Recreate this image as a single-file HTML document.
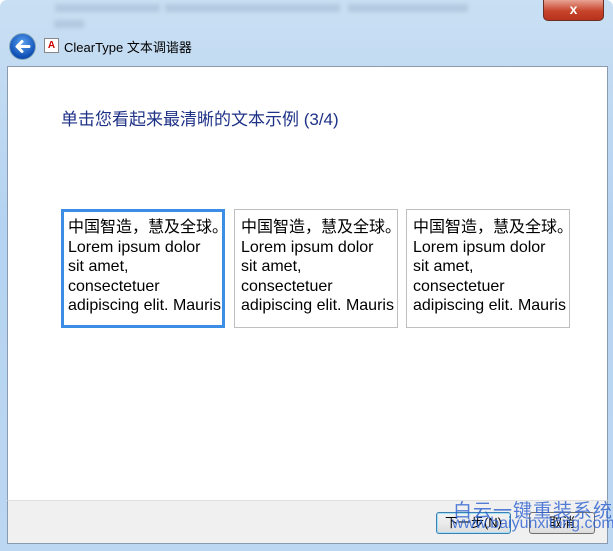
<!DOCTYPE html>
<html><head><meta charset="utf-8"><style>
body{margin:0;width:613px;height:551px;overflow:hidden;font-family:"Liberation Sans","Noto Sans CJK SC",sans-serif;}
.win{position:absolute;left:0;top:0;width:613px;height:551px;background:linear-gradient(180deg,#c9dff3 0%,#b5d3f1 40%,#bcd7f2 100%);border-radius:7px 7px 0 0;}
.blur{position:absolute;top:4px;height:8px;background:#a9c0d8;filter:blur(2px);opacity:.7}
.close{position:absolute;left:543px;top:0;width:59px;height:20px;background:linear-gradient(#e8a394,#c7442b 55%,#b8321c);border:1px solid #6b2e24;border-top:none;border-radius:0 0 5px 5px;color:#fff;font-weight:bold;font-size:14px;text-align:center;line-height:19px}
.back{position:absolute;left:9px;top:33px;width:25px;height:25px;border-radius:50%;background:radial-gradient(circle at 50% 35%,#5aa0f0,#0f4fb5 70%,#0a3a8a);border:1px solid #8ab;}
.title{position:absolute;left:64px;top:37px;font-size:13px;color:#000}
.ico{position:absolute;left:44px;top:38px;width:13px;height:13px;border:1px solid #888;background:#fff;font-size:10px;line-height:13px;text-align:center;color:#c00;font-weight:bold}
.content{position:absolute;left:7px;top:66px;width:599px;height:434px;background:#fff;border:1px solid #8a9bb0;border-bottom:none}
.foot{position:absolute;left:7px;top:500px;width:599px;height:42px;background:#f0f0f0;border:1px solid #8a9bb0;border-top:1px solid #dfdfdf}
h1{position:absolute;left:61px;top:105px;margin:0;font-size:17px;font-weight:normal;color:#1e3287}
.box{position:absolute;top:209px;width:150px;height:103px;padding:8px 6px 6px;border:1px solid #bfbfbf;font-size:16px;line-height:19.5px;color:#000;white-space:nowrap;overflow:hidden}
.box.sel{border:3px solid #3b8de6;padding:6px 4px 4px;width:150px;height:103px}
.btn{position:absolute;top:512px;height:20px;border:1px solid #707070;border-radius:3px;background:linear-gradient(#f2f2f2,#ebebeb 50%,#dcdcdc);font-size:13px;line-height:20px;text-align:center}
.wm{position:absolute;color:#2a5fd0;opacity:.8}
</style></head><body>
<div class="win">
<div class="blur" style="left:55px;width:105px"></div><div class="blur" style="left:165px;width:175px"></div><div class="blur" style="left:348px;width:120px"></div><div class="blur" style="left:54px;top:20px;width:30px"></div>
<div class="close">x</div>
<div class="back"><svg width="25" height="25" viewBox="0 0 25 25"><path d="M19 12.5H8M12 7.5l-5 5 5 5" stroke="#fff" stroke-width="3" fill="none" stroke-linecap="round" stroke-linejoin="round"/></svg></div>
<div class="ico">A</div>
<div class="title">ClearType 文本调谐器</div>
<div class="content"></div>
<div class="foot"></div>
<h1>单击您看起来最清晰的文本示例 (3/4)</h1>
<div class="box sel" style="left:61px">中国智造，慧及全球。<br>Lorem ipsum dolor<br>sit amet,<br>consectetuer<br>adipiscing elit. Mauris</div>
<div class="box" style="left:234px">中国智造，慧及全球。<br>Lorem ipsum dolor<br>sit amet,<br>consectetuer<br>adipiscing elit. Mauris</div>
<div class="box" style="left:406px">中国智造，慧及全球。<br>Lorem ipsum dolor<br>sit amet,<br>consectetuer<br>adipiscing elit. Mauris</div>
<div class="btn" style="left:436px;width:73px;border-color:#3c7fb1;box-shadow:inset 0 0 0 1px #a6e0f7">下一步(N)</div>
<div class="btn" style="left:529px;width:64px">取消</div>
<div class="wm" style="left:453px;top:496px;font-size:19px;letter-spacing:1px">白云一键重装系统</div>
<div class="wm" style="left:452px;top:515px;font-size:16px">www.baiyunxitong.com</div>
</div>
</body></html>
